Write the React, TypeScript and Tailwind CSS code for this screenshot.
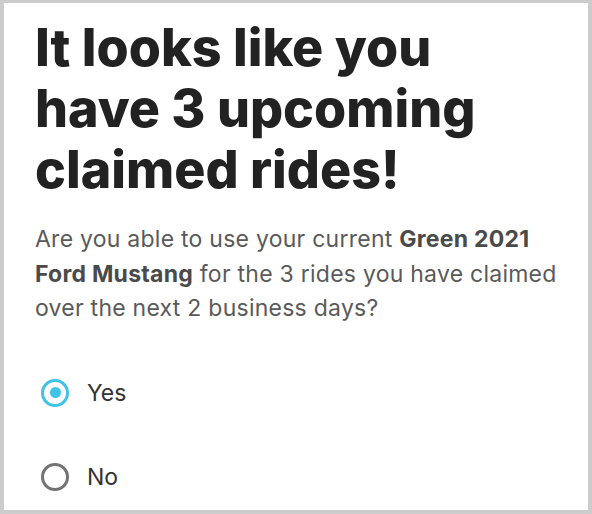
import React, { useState } from "react";

function Radio({ checked }: { checked: boolean }) {
  return checked ? (
    <span className="flex h-[28px] w-[28px] items-center justify-center rounded-full border-[3px] border-[#3fc3e6]">
      <span className="h-[11px] w-[11px] rounded-full bg-[#3fc3e6]" />
    </span>
  ) : (
    <span className="h-[28px] w-[28px] rounded-full border-[3px] border-[#737373]" />
  );
}

export default function App() {
  const [value, setValue] = useState<"yes" | "no">("yes");
  return (
    <div className="h-[514px] w-[592px] border-t-[3px] border-l-[4px] border-r-[4px] border-b-[4px] border-[#cccccc] bg-white font-['Inter',sans-serif]">
      <div className="pl-[31px] pt-[14px]">
        <h1 className="text-[52px] font-extrabold leading-[61px] text-[#222222]">
          It looks like you
          <br />
          have 3 upcoming
          <br />
          claimed rides!
        </h1>
        <p className="mt-[22px] text-[23px] leading-[34.5px] tracking-[0.25px] text-[#5a5a5a]">
          Are you able to use your current <b className="font-bold text-[#4a4a4a]">Green 2021</b>
          <br />
          <b className="font-bold text-[#4a4a4a]">Ford Mustang</b> for the 3 rides you have claimed
          <br />
          over the next 2 business days?
        </p>
        <div className="mt-[53px] ml-[6px] flex flex-col gap-[56px]">
          <button className="flex items-center gap-[18px] text-left" onClick={() => setValue("yes")}>
            <Radio checked={value === "yes"} />
            <span className="text-[23px] leading-[28px] text-[#333333]">Yes</span>
          </button>
          <button className="flex items-center gap-[18px] text-left" onClick={() => setValue("no")}>
            <Radio checked={value === "no"} />
            <span className="text-[23px] leading-[28px] text-[#333333]">No</span>
          </button>
        </div>
      </div>
    </div>
  );
}
